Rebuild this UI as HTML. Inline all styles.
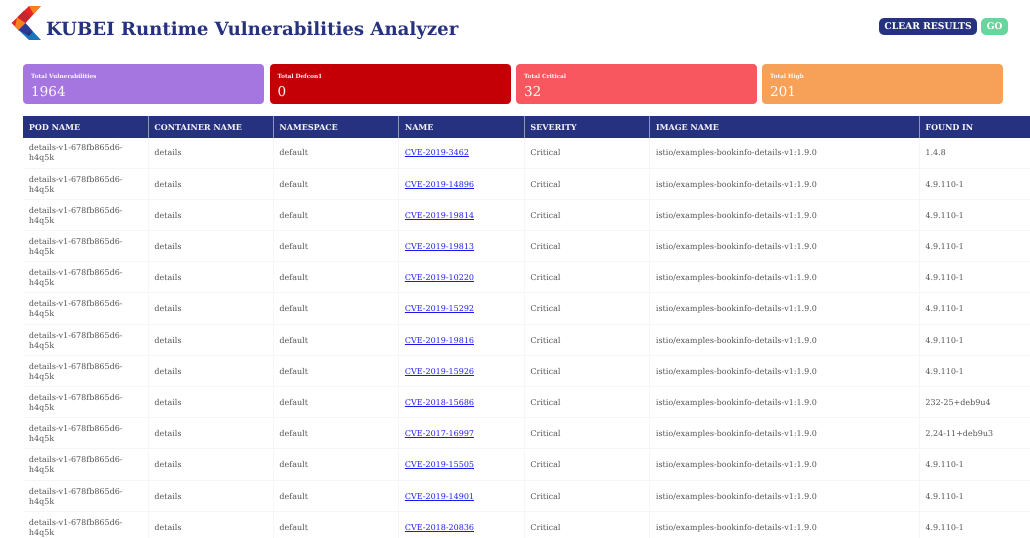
<!DOCTYPE html>
<html><head><meta charset="utf-8"><title>KUBEI Runtime Vulnerabilities Analyzer</title>
<style>
html,body{margin:0;padding:0;background:#fff;width:1030px;height:538px;overflow:hidden}
body{position:relative;font-family:"DejaVu Serif","Liberation Serif",serif;text-rendering:geometricPrecision;filter:blur(.3px)}
h1{position:absolute;left:46px;top:17.5px;margin:0;font-size:18.15px;line-height:24px;font-weight:bold;color:#26317f;white-space:nowrap}
.logo{position:absolute;left:0;top:0}
.btn{position:absolute;top:17.5px;height:17px;border-radius:5px;color:#fff;font-weight:bold;font-size:9.2px;line-height:17.5px;text-align:center}
.card{position:absolute;top:64px;height:40px;border-radius:4px;color:#fff;width:241px}
.card b{position:absolute;left:8px;top:8.5px;font-size:5.75px;line-height:8px;white-space:nowrap;opacity:.92}
.card span{position:absolute;left:8px;top:17.5px;font-size:13.6px;line-height:20px;opacity:.95}
.r{position:absolute;left:23px;width:1010px;height:31.2px;box-sizing:border-box;border-bottom:1px solid #f6f6f6;color:#555;font-size:8px;line-height:10px}
.r div{position:absolute;top:0;bottom:0;display:flex;align-items:center;box-sizing:border-box;padding-left:5.9px;padding-top:1.8px;border-right:1px solid #f6f6f6}
.r div:nth-child(1){left:0;width:125.5px}
.r div:nth-child(2){left:125.5px;width:125px}
.r div:nth-child(3){left:250.5px;width:125.5px}
.r div:nth-child(4){left:376px;width:125.5px}
.r div:nth-child(5){left:501.5px;width:125.5px}
.r div:nth-child(6){left:627px;width:269.5px}
.r div:nth-child(7){left:896.5px;width:113px;border-right:0}
.r a{color:#1a1aee;text-decoration:underline}
.h{top:116px;height:21.5px;background:#26317f;color:#f2f3fa;font-weight:bold;border-bottom:0;font-size:8px}
.h div{border-right:1px solid #8f95c2;padding-top:0}
</style></head><body>
<svg class="logo" width="50" height="46" viewBox="0 0 50 46">
<polygon points="29,6 41,6 25.5,23 18.5,30 11.5,23" fill="#ec2227"/>
<polygon points="29,6 41,6 33.5,14" fill="#f5821f"/>
<polygon points="18,16.5 24,10.5 31,16.5 25.5,23" fill="#c4262e"/>
<polygon points="17,17.5 25.5,23 19,31 15,27" fill="#f5821f"/>
<polygon points="25.5,23 33,31.5 25,34 18.5,30" fill="#2b3a92"/>
<polygon points="18.5,30 29,40 41,40 33,31.5 25,33" fill="#1b75bc"/>
<polygon points="18.5,30 25,33 33,31.5 29,36" fill="#27327f"/>
</svg>
<h1>KUBEI Runtime Vulnerabilities Analyzer</h1>
<div class="btn" style="left:879px;width:98px;background:#26317f">CLEAR RESULTS</div>
<div class="btn" style="left:981px;width:27px;background:#66d69c">GO</div>
<div class="card" style="left:23px;background:#a575e0"><b>Total Vulnerabilities</b><span>1964</span></div>
<div class="card" style="left:269.5px;background:#c40006"><b>Total Defcon1</b><span>0</span></div>
<div class="card" style="left:516px;background:#f9575f"><b>Total Critical</b><span>32</span></div>
<div class="card" style="left:762px;background:#f7a058"><b>Total High</b><span>201</span></div>

<div class="r h"><div>POD NAME</div><div>CONTAINER NAME</div><div>NAMESPACE</div><div>NAME</div><div>SEVERITY</div><div>IMAGE NAME</div><div>FOUND IN</div></div>

<div class="r" style="top:137.5px"><div>details-v1-678fb865d6-<br>h4q5k</div><div>details</div><div>default</div><div><a href="#">CVE-2019-3462</a></div><div>Critical</div><div>istio/examples-bookinfo-details-v1:1.9.0</div><div>1.4.8</div></div>
<div class="r" style="top:168.7px"><div>details-v1-678fb865d6-<br>h4q5k</div><div>details</div><div>default</div><div><a href="#">CVE-2019-14896</a></div><div>Critical</div><div>istio/examples-bookinfo-details-v1:1.9.0</div><div>4.9.110-1</div></div>
<div class="r" style="top:199.9px"><div>details-v1-678fb865d6-<br>h4q5k</div><div>details</div><div>default</div><div><a href="#">CVE-2019-19814</a></div><div>Critical</div><div>istio/examples-bookinfo-details-v1:1.9.0</div><div>4.9.110-1</div></div>
<div class="r" style="top:231.1px"><div>details-v1-678fb865d6-<br>h4q5k</div><div>details</div><div>default</div><div><a href="#">CVE-2019-19813</a></div><div>Critical</div><div>istio/examples-bookinfo-details-v1:1.9.0</div><div>4.9.110-1</div></div>
<div class="r" style="top:262.3px"><div>details-v1-678fb865d6-<br>h4q5k</div><div>details</div><div>default</div><div><a href="#">CVE-2019-10220</a></div><div>Critical</div><div>istio/examples-bookinfo-details-v1:1.9.0</div><div>4.9.110-1</div></div>
<div class="r" style="top:293.5px"><div>details-v1-678fb865d6-<br>h4q5k</div><div>details</div><div>default</div><div><a href="#">CVE-2019-15292</a></div><div>Critical</div><div>istio/examples-bookinfo-details-v1:1.9.0</div><div>4.9.110-1</div></div>
<div class="r" style="top:324.7px"><div>details-v1-678fb865d6-<br>h4q5k</div><div>details</div><div>default</div><div><a href="#">CVE-2019-19816</a></div><div>Critical</div><div>istio/examples-bookinfo-details-v1:1.9.0</div><div>4.9.110-1</div></div>
<div class="r" style="top:355.9px"><div>details-v1-678fb865d6-<br>h4q5k</div><div>details</div><div>default</div><div><a href="#">CVE-2019-15926</a></div><div>Critical</div><div>istio/examples-bookinfo-details-v1:1.9.0</div><div>4.9.110-1</div></div>
<div class="r" style="top:387.1px"><div>details-v1-678fb865d6-<br>h4q5k</div><div>details</div><div>default</div><div><a href="#">CVE-2018-15686</a></div><div>Critical</div><div>istio/examples-bookinfo-details-v1:1.9.0</div><div>232-25+deb9u4</div></div>
<div class="r" style="top:418.3px"><div>details-v1-678fb865d6-<br>h4q5k</div><div>details</div><div>default</div><div><a href="#">CVE-2017-16997</a></div><div>Critical</div><div>istio/examples-bookinfo-details-v1:1.9.0</div><div>2.24-11+deb9u3</div></div>
<div class="r" style="top:449.5px"><div>details-v1-678fb865d6-<br>h4q5k</div><div>details</div><div>default</div><div><a href="#">CVE-2019-15505</a></div><div>Critical</div><div>istio/examples-bookinfo-details-v1:1.9.0</div><div>4.9.110-1</div></div>
<div class="r" style="top:480.7px"><div>details-v1-678fb865d6-<br>h4q5k</div><div>details</div><div>default</div><div><a href="#">CVE-2019-14901</a></div><div>Critical</div><div>istio/examples-bookinfo-details-v1:1.9.0</div><div>4.9.110-1</div></div>
<div class="r" style="top:511.9px"><div>details-v1-678fb865d6-<br>h4q5k</div><div>details</div><div>default</div><div><a href="#">CVE-2018-20836</a></div><div>Critical</div><div>istio/examples-bookinfo-details-v1:1.9.0</div><div>4.9.110-1</div></div>
</body></html>
